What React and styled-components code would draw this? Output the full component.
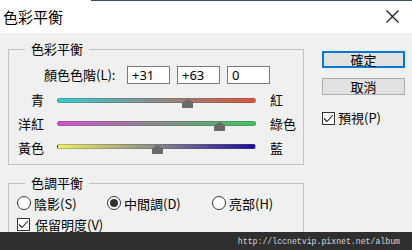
import React from "react";
import styled, { createGlobalStyle } from "styled-components";

const GlobalStyle = createGlobalStyle`
  html, body {
    margin: 0;
    padding: 0;
    background: #f0f0f0;
  }
  body {
    font-family: "Noto Sans CJK TC", "Noto Sans", sans-serif;
    font-size: 13px;
    color: #000;
  }
`;

const Dialog = styled.div`
  position: relative;
  width: 412px;
  height: 250px;
  overflow: hidden;
  background: #f0f0f0;
`;

const TitleBar = styled.div`
  height: 33px;
  display: flex;
  align-items: center;
  justify-content: space-between;
  padding: 0 13px 0 3px;
  box-sizing: border-box;
  background: linear-gradient(to right, #ffffff 22%, #34566f 22%) top / 100% 1px no-repeat,
    #ffffff;
`;

const Title = styled.div`
  font-size: 15px;
  line-height: 18px;
`;

const Body = styled.div`
  display: flex;
  padding: 7px 0 0 8px;
  gap: 18px;
`;

const LeftColumn = styled.div`
  display: flex;
  flex-direction: column;
  gap: 9px;
  width: 296px;
`;

const Group = styled.fieldset`
  margin: 0;
  padding: 0 8px ${(p) => p.$bottom}px;
  border: 1px solid #c3c3c3;
  min-width: 0;
`;

const Legend = styled.legend`
  margin-left: 8px;
  padding: 0 6px;
  font-size: 13px;
  line-height: 18px;
`;

const LevelRow = styled.div`
  display: flex;
  align-items: center;
  margin-top: 8px;
  padding-left: 27px;
  gap: 7px;
`;

const LevelLabel = styled.span`
  width: 76px;
  line-height: 18px;
`;

const LevelBox = styled.div`
  height: 16px;
  border: 1px solid #7a7a7a;
  background: #fff;
  padding-left: 4px;
  box-sizing: content-box;
  width: 37px;
  font-family: "Noto Sans", "Liberation Sans", sans-serif;
  font-size: 13px;
  line-height: 16px;
`;

const Sliders = styled.div`
  display: grid;
  grid-template-columns: 27px 199px auto;
  column-gap: 13px;
  grid-auto-rows: 24px;
  align-items: center;
  margin-top: 4px;
`;

const SideLabel = styled.span`
  text-align: ${(p) => (p.$right ? "right" : "left")};
  white-space: nowrap;
  line-height: 18px;
  margin-left: ${(p) => (p.$right ? "0" : "1px")};
`;

const Track = styled.div`
  position: relative;
  height: 5px;
  margin-top: ${(p) => p.$shift}px;
  border-radius: 3px;
  border: 1px solid rgba(90, 90, 90, 0.35);
  box-sizing: border-box;
  background: linear-gradient(to right, ${(p) => p.$from}, ${(p) => p.$mid}, ${(p) => p.$to});
`;

const Thumb = styled.svg`
  position: absolute;
  top: 0px;
  width: 11px;
  height: 9px;
  margin-left: -5px;
`;

const RightColumn = styled.div`
  display: flex;
  flex-direction: column;
  width: 83px;
  padding-top: 11px;
`;

const Button = styled.div`
  height: 17px;
  display: flex;
  align-items: center;
  justify-content: center;
  background: #e1e1e1;
  border: 1px solid ${(p) => (p.$primary ? "#0078d7" : "#adadad")};
  box-shadow: ${(p) => (p.$primary ? "inset 0 0 0 1px #0078d7" : "none")};
  box-sizing: border-box;
  font-size: 13px;
  margin-bottom: 10px;
`;

const CheckRow = styled.div`
  display: flex;
  align-items: center;
  gap: ${(p) => p.$gap || 4}px;
  margin-top: ${(p) => p.$top || 0}px;
  height: ${(p) => p.$height || 18}px;
  line-height: 18px;
  font-size: 13px;
`;

const Box = styled.span`
  width: 13px;
  height: 13px;
  border: 1px solid #333;
  background: #fff;
  box-sizing: border-box;
  display: flex;
  align-items: center;
  justify-content: center;
`;

const RadioRow = styled.div`
  display: flex;
  align-items: center;
  height: 22px;
`;

const Radio = styled.label`
  display: flex;
  align-items: center;
  gap: 3px;
  width: ${(p) => p.$width}px;
  font-size: 13px;
`;

const Circle = styled.span`
  width: 14px;
  height: 14px;
  border: 1px solid #333;
  border-radius: 50%;
  background: #fff;
  box-sizing: border-box;
  display: flex;
  align-items: center;
  justify-content: center;
  &::after {
    content: "";
    display: ${(p) => (p.$on ? "block" : "none")};
    width: 8px;
    height: 8px;
    border-radius: 50%;
    background: #333;
  }
`;

const Watermark = styled.div`
  position: absolute;
  left: 0;
  right: 0;
  bottom: 0;
  height: 18px;
  background: rgba(34, 34, 34, 0.94);
  display: flex;
  align-items: center;
  justify-content: flex-end;
  padding-right: 12px;
  font-family: "Liberation Mono", "DejaVu Sans Mono", monospace;
  font-size: 8.2px;
  color: #d6d6d6;
`;

const sliders = [
  { left: "青", right: "紅", value: 31, from: "#33cccc", mid: "#8c8c8c", to: "#d9553a", shift: 0 },
  { left: "洋紅", right: "綠色", value: 63, from: "#d44fd4", mid: "#8a8a8a", to: "#3fc463", shift: -2 },
  { left: "黃色", right: "藍", value: 0, from: "#eeee66", mid: "#8a8a8a", to: "#1a0aa0", shift: -4 },
];

function Check() {
  return (
    <svg width="11" height="9" viewBox="0 0 11 9">
      <path d="M1 4.5 L4 7.5 L10 1" fill="none" stroke="#222" strokeWidth="1.1" />
    </svg>
  );
}

export default function App() {
  return (
    <Dialog>
      <GlobalStyle />
      <TitleBar>
        <Title>色彩平衡</Title>
        <svg width="13" height="13" viewBox="0 0 13 13">
          <path d="M0.5 0.5 L12.5 12.5 M12.5 0.5 L0.5 12.5" stroke="#111" strokeWidth="1.1" />
        </svg>
      </TitleBar>
      <Body>
        <LeftColumn>
          <Group $bottom={4}>
            <Legend>色彩平衡</Legend>
            <LevelRow>
              <LevelLabel>顏色色階(L):</LevelLabel>
              <LevelBox>+31</LevelBox>
              <LevelBox>+63</LevelBox>
              <LevelBox>0</LevelBox>
            </LevelRow>
            <Sliders>
              {sliders.map((s) => (
                <React.Fragment key={s.left}>
                  <SideLabel $right>{s.left}</SideLabel>
                  <Track $from={s.from} $mid={s.mid} $to={s.to} $shift={s.shift}>
                    <Thumb
                      viewBox="0 0 11 9"
                      style={{ left: `${((s.value + 100) / 200) * 100}%` }}
                    >
                      <polygon points="5.5,0 11,3.5 11,9 0,9 0,3.5" fill="#6a6a6a" />
                    </Thumb>
                  </Track>
                  <SideLabel>{s.right}</SideLabel>
                </React.Fragment>
              ))}
            </Sliders>
          </Group>
          <Group $bottom={4}>
            <Legend>色調平衡</Legend>
            <RadioRow>
              <Radio $width={90}>
                <Circle />
                陰影(S)
              </Radio>
              <Radio $width={105}>
                <Circle $on />
                中間調(D)
              </Radio>
              <Radio $width={80}>
                <Circle />
                亮部(H)
              </Radio>
            </RadioRow>
            <CheckRow $gap={5} $height={21}>
              <Box>
                <Check />
              </Box>
              保留明度(V)
            </CheckRow>
          </Group>
        </LeftColumn>
        <RightColumn>
          <Button $primary>確定</Button>
          <Button>取消</Button>
          <CheckRow $top={4} $gap={3}>
            <Box>
              <Check />
            </Box>
            預視(P)
          </CheckRow>
        </RightColumn>
      </Body>
      <Watermark>http://lccnetvip.pixnet.net/album</Watermark>
    </Dialog>
  );
}
